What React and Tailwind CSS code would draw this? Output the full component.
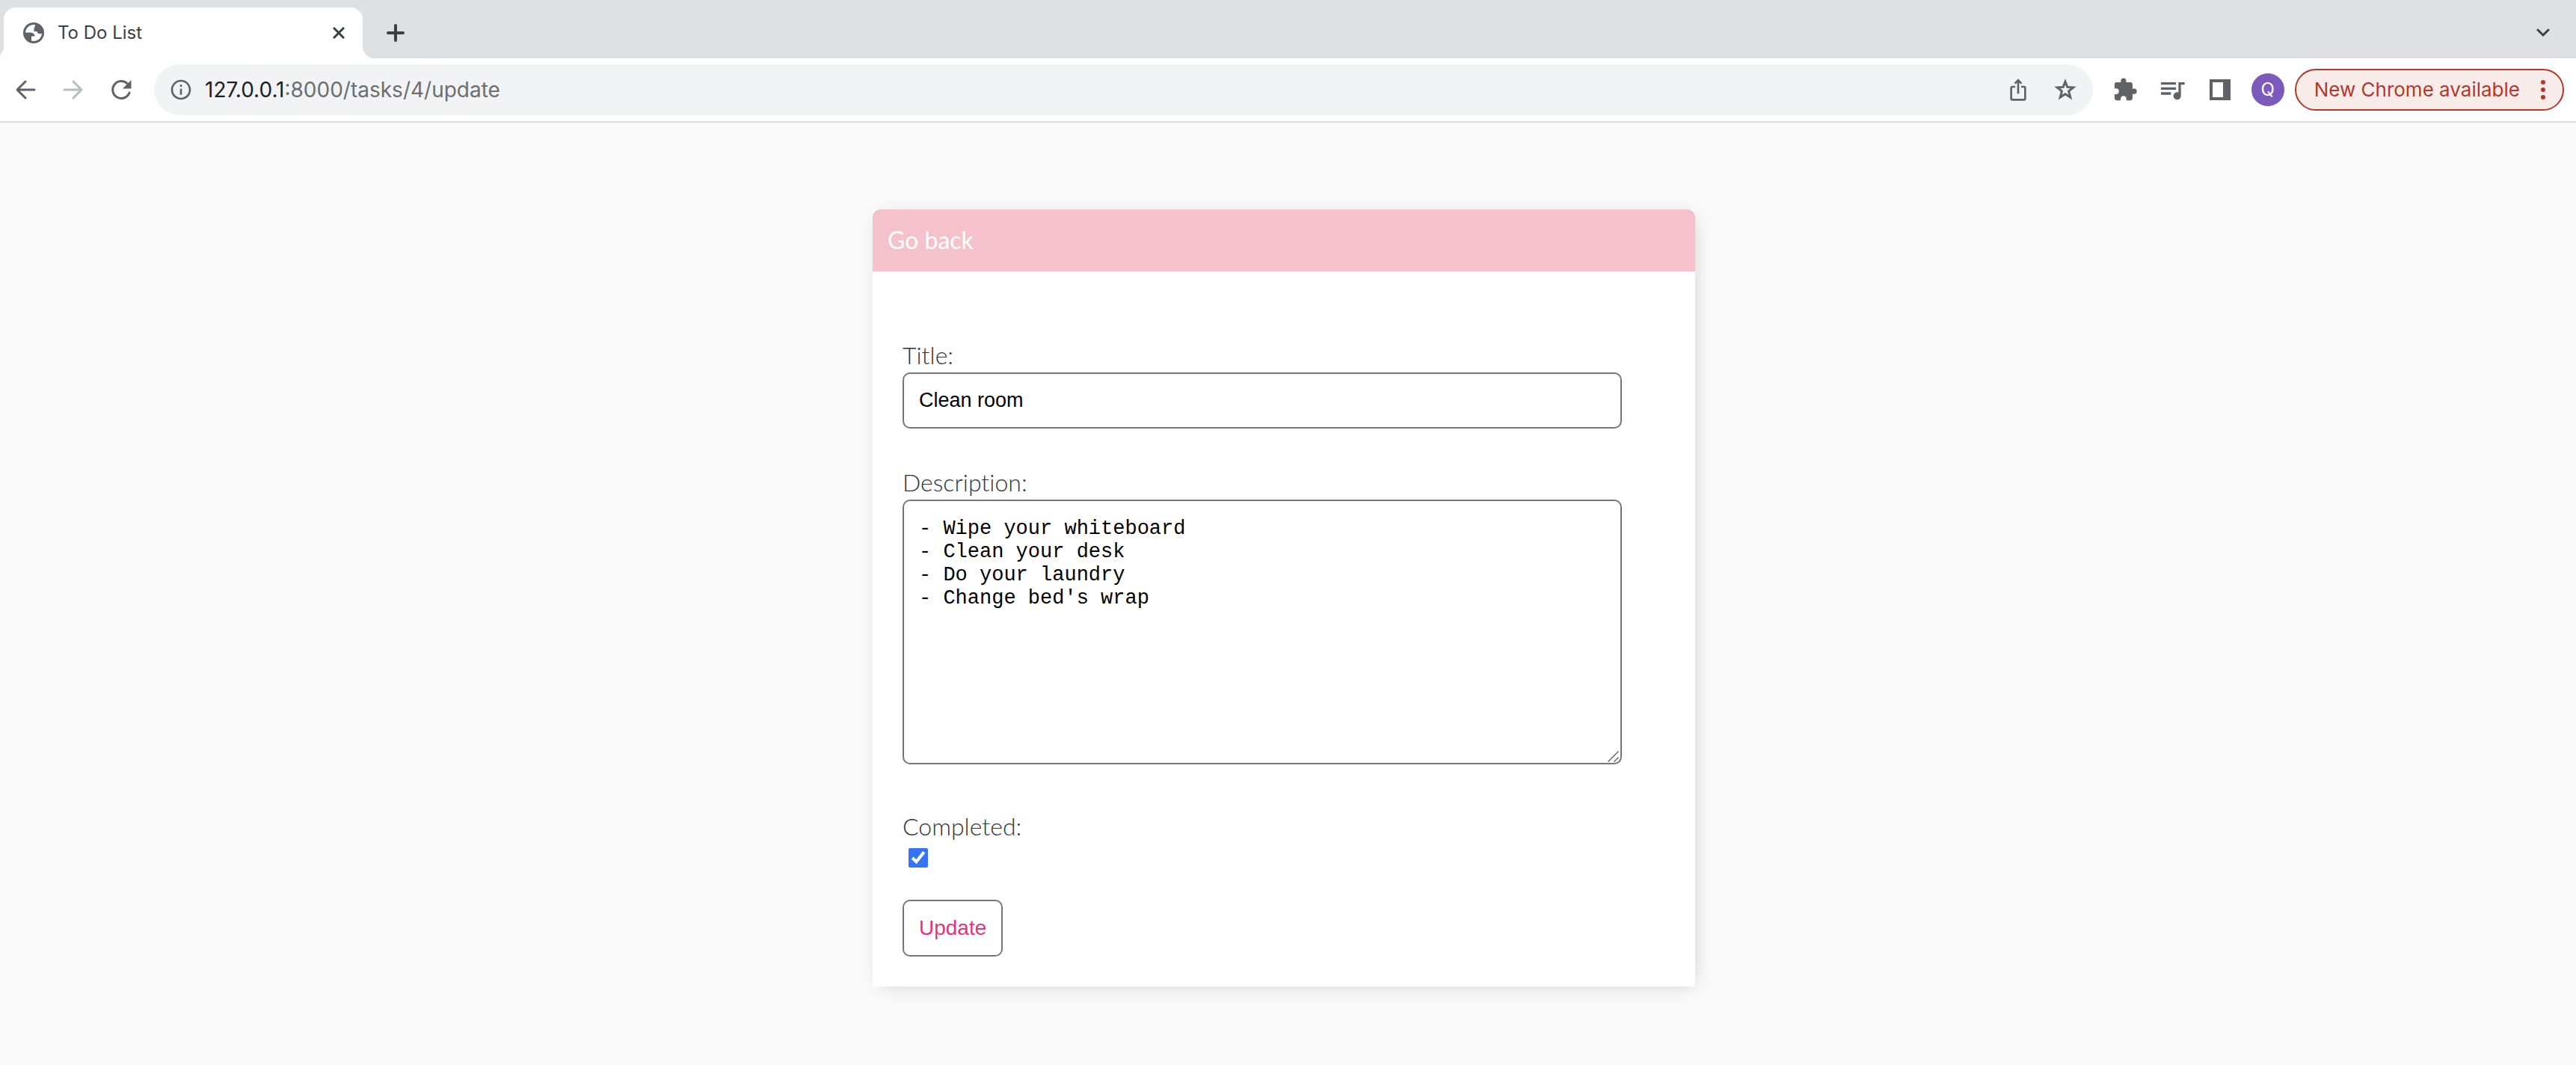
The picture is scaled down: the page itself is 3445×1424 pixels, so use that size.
import React from "react";
import { MdInfoOutline, MdIosShare, MdExtension, MdQueueMusic } from "react-icons/md";

function GlobeIcon() {
  return (
    <svg viewBox="0 0 28 28" className="size-7 shrink-0" aria-hidden="true">
      <circle cx="14" cy="14" r="14" fill="#5f6368" />
      <path d="M16 3.200C10 2 3.400 6.500 3 13.500H9C12.500 13.500 15.500 15 15.500 18.500H11V24.600C18 26 24.500 22 25 14.500C23 16 19 15.500 18.500 12H14.500V8.500C14.500 6.500 16 6 16 3.200Z" fill="#fff" />
    </svg>
  );
}

function ArrowIcon({ flip }) {
  return (
    <svg viewBox="0 0 28 28" className={flip ? "size-7 rotate-180" : "size-7"} fill="none" stroke="currentColor" strokeWidth="3" strokeLinecap="round" strokeLinejoin="round" aria-hidden="true">
      <path d="M26 14H3M14 3L3 14l11 11" />
    </svg>
  );
}

function ReloadIcon() {
  return (
    <svg viewBox="0 0 28 28" className="size-7" aria-hidden="true">
      <path d="M22.500 6A11.500 11.500 0 1 0 25 18" fill="none" stroke="currentColor" strokeWidth="3" strokeLinecap="round" />
      <path d="M27.500 1v11.500H16z" fill="currentColor" />
    </svg>
  );
}

function StarIcon() {
  return (
    <svg viewBox="0 0 30 30" className="size-[30px]" fill="none" stroke="currentColor" strokeWidth="3" aria-hidden="true">
      <path d="M15 4.200l2.800 7.200 8 .5-6.200 5 2.200 8.200L15 20.700l-6.800 4.400 2.200-8.200-6.200-5 8-.5z" />
    </svg>
  );
}

function TabStrip() {
  return (
    <header className="flex h-[78px] items-end bg-[#dee0e4] pl-[5px] pr-[35px] font-[Inter,sans-serif]">
      <div className="relative flex h-[68px] w-[480px] items-center rounded-t-[16px] bg-white pl-[26px] pr-6">
        <GlobeIcon />
        <span className="ml-[18px] flex-1 text-[24px] leading-8 text-[#3c4043]">To Do List</span>
        <button aria-label="Close tab" className="text-[#3c4043]">
          <svg viewBox="0 0 16 16" className="size-4" fill="none" stroke="currentColor" strokeWidth="3"><path d="M1 1l14 14M15 1L1 15" /></svg>
        </button>
        <svg viewBox="0 0 16 16" className="absolute bottom-0 left-full size-4" aria-hidden="true"><path d="M0 0v16h16C7 16 0 9 0 0z" fill="#fff" /></svg>
        <svg viewBox="0 0 16 16" className="absolute bottom-0 right-full size-4" aria-hidden="true"><path d="M16 0v16H0C9 16 16 9 16 0z" fill="#fff" /></svg>
      </div>
      <button aria-label="New tab" className="mb-[22px] ml-8 text-[#3c4043]">
        <svg viewBox="0 0 24 24" className="size-6" fill="none" stroke="currentColor" strokeWidth="4" strokeLinecap="round"><path d="M12 2v20M2 12h20" /></svg>
      </button>
      <button aria-label="Search tabs" className="mb-7 ml-auto text-[#3c4043]">
        <svg viewBox="0 0 18 12" className="h-3 w-[18px]" fill="none" stroke="currentColor" strokeWidth="3" strokeLinecap="round"><path d="M2 2l7 7 7-7" /></svg>
      </button>
    </header>
  );
}

function Toolbar() {
  return (
    <nav className="flex h-[86px] items-center border-b-2 border-[#dadce0] bg-white pl-5 pr-4 font-[Inter,sans-serif] text-[#5f6368]">
      <button aria-label="Back"><ArrowIcon /></button>
      <button aria-label="Forward" className="ml-9 text-[#babcbe]"><ArrowIcon flip /></button>
      <button aria-label="Reload" className="ml-9"><ReloadIcon /></button>
      <div className="ml-[30px] flex h-[68px] min-w-0 flex-1 items-center rounded-full bg-[#f1f3f4] pl-5 pr-[22px]">
        <button aria-label="Site information"><MdInfoOutline className="size-8" /></button>
        <div role="textbox" aria-label="Address" className="ml-4 flex-1 text-[28px] leading-9 text-[#6b6e72]">
          <span className="text-[#202124]">127.0.0.1</span>:8000/tasks/4/update
        </div>
        <button aria-label="Share"><MdIosShare className="size-8" /></button>
        <button aria-label="Bookmark" className="ml-8"><StarIcon /></button>
      </div>
      <button aria-label="Extensions" className="ml-[26px]"><MdExtension className="size-[34px]" /></button>
      <button aria-label="Media controls" className="ml-[26px]"><MdQueueMusic className="size-10" /></button>
      <button aria-label="Side panel" className="ml-[30px]">
        <svg viewBox="0 0 28 28" className="size-7"><path fillRule="evenodd" d="M0 0h28v28H0zM4 4v20h14V4z" fill="currentColor" /></svg>
      </button>
      <button aria-label="Profile" className="ml-7 size-11 rounded-full bg-[#7b5abc] text-[24px] leading-8 text-white">Q</button>
      <button className="ml-[14px] flex h-14 items-center rounded-full border-2 border-[#b3372b] bg-[#f8eceb] pl-6 pr-[22px] text-[26px] leading-9 text-[#b3372b]">
        New Chrome available
        <svg viewBox="0 0 8 28" className="ml-[27px] h-7 w-2" fill="currentColor" aria-hidden="true"><circle cx="4" cy="4" r="3" /><circle cx="4" cy="14" r="3" /><circle cx="4" cy="24" r="3" /></svg>
      </button>
    </nav>
  );
}

const labelClass = "block text-[32px] font-light leading-[42px] pb-0.5 text-[#2f353a]";

export default function App() {
  return (
    <div className="flex min-h-screen flex-col bg-[#fafafa]">
      <TabStrip />
      <Toolbar />
      <main className="flex-1 pb-20 pr-[11px] pt-[116px] font-[Lato,sans-serif] [font-variant-ligatures:none]">
        <div className="mx-auto max-w-[1100px] bg-white shadow-[4px_4px_26px_-8px_rgba(0,0,0,0.21)]">
          <div className="flex h-[83px] items-center rounded-t-[10px] bg-[#f5c2cb] px-5">
            <a href="#back" className="pb-0.5 text-[32px] leading-[42px] text-white">Go back</a>
          </div>
          <form className="pb-10 pl-10 pr-[98px] pt-[91px]" onSubmit={(e) => e.preventDefault()}>
            <label htmlFor="title" className={labelClass}>Title:</label>
            <input id="title" type="text" defaultValue="Clean room" className="block h-[75px] w-full rounded-[10px] border-2 border-[#767676] bg-white px-5 font-['Liberation_Sans',Arial,sans-serif] text-[27px] text-black" />
            <label htmlFor="description" className={labelClass + " mt-[51px]"}>Description:</label>
            <div className="relative">
              <textarea id="description" defaultValue={"- Wipe your whiteboard\n- Clean your desk\n- Do your laundry\n- Change bed's wrap"} className="block h-[354px] w-full resize-none rounded-[10px] border-2 border-[#767676] bg-white px-5 pb-5 pt-[22px] font-['Liberation_Mono',monospace] text-[27px] leading-[31px] text-black" />
              <svg viewBox="0 0 16 16" className="pointer-events-none absolute bottom-[3px] right-[3px] size-4" fill="none" stroke="#6b6b6b" strokeWidth="1.500" aria-hidden="true"><path d="M0.500 15.500l14-14M8.500 15.500l6-6" /></svg>
            </div>
            <label htmlFor="completed" className={labelClass + " mt-[62px]"}>Completed:</label>
            <input id="completed" type="checkbox" defaultChecked className="ml-2 mt-1.5 block size-[26px] accent-[#3574f6]" />
            <button type="submit" className="mt-[43px] block h-[76px] rounded-[10px] border-2 border-[#767676] px-5 font-['Liberation_Sans',Arial,sans-serif] text-[28px] text-[#e9327c]">Update</button>
          </form>
        </div>
      </main>
    </div>
  );
}
